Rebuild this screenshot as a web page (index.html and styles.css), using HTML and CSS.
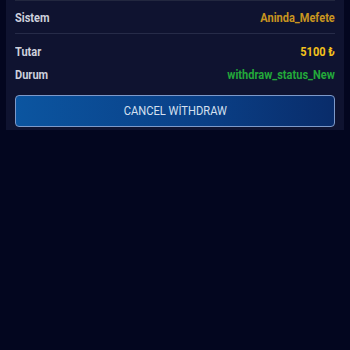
FILE: index.html
```
<!DOCTYPE html>
<html>
<head>
<meta charset="utf-8">
<link rel="stylesheet" href="styles.css">
</head>
<body>
<div class="card">
  <div class="row row-top">
    <span class="label">Sistem</span>
    <span class="value system">Aninda_Mefete</span>
  </div>
  <div class="row row-gap">
    <span class="label">Tutar</span>
    <span class="value amount">5100 ₺</span>
  </div>
  <div class="row">
    <span class="label">Durum</span>
    <span class="value status">withdraw_status_New</span>
  </div>
  <button class="cancel"><span class="btn-text">CANCEL WİTHDRAW</span></button>
</div>
</body>
</html>
```
FILE: styles.css
```
html, body {
  margin: 0;
  padding: 0;
  background: #03061f;
  font-family: Roboto, "Noto Sans", sans-serif;
}
.card {
  margin: 0 6px;
  background: #0f1330;
  padding: 0 9px 3px;
}
.row {
  display: flex;
  justify-content: space-between;
  align-items: center;
  height: 23px;
  font-size: 12.4px;
  font-weight: 700;
}
.row-top {
  height: 32px;
  border-top: 1px solid #22273f;
  border-bottom: 1px solid #262b48;
  margin-bottom: 5.5px;
}
.label {
  display: inline-block;
  color: #cdd0dc;
  transform: scaleX(0.89);
  transform-origin: left center;
}
.value {
  display: inline-block;
  transform: scaleX(0.89);
  transform-origin: right center;
}
.system { color: #c8951f; }
.amount { color: #f3c11c; }
.status { color: #23a83a; }
.cancel {
  display: block;
  width: 100%;
  height: 32px;
  margin-top: 9px;
  border: 1px solid #7d99c9;
  border-radius: 4px;
  background: linear-gradient(90deg, #0b55a0 0%, #0a3f86 60%, #092c6a 100%);
  color: #d5e0f0;
  font-family: Roboto, "Noto Sans", sans-serif;
  font-size: 12.4px;
  font-weight: 400;
}
.btn-text {
  display: inline-block;
  transform: scaleX(0.9);
}
```
